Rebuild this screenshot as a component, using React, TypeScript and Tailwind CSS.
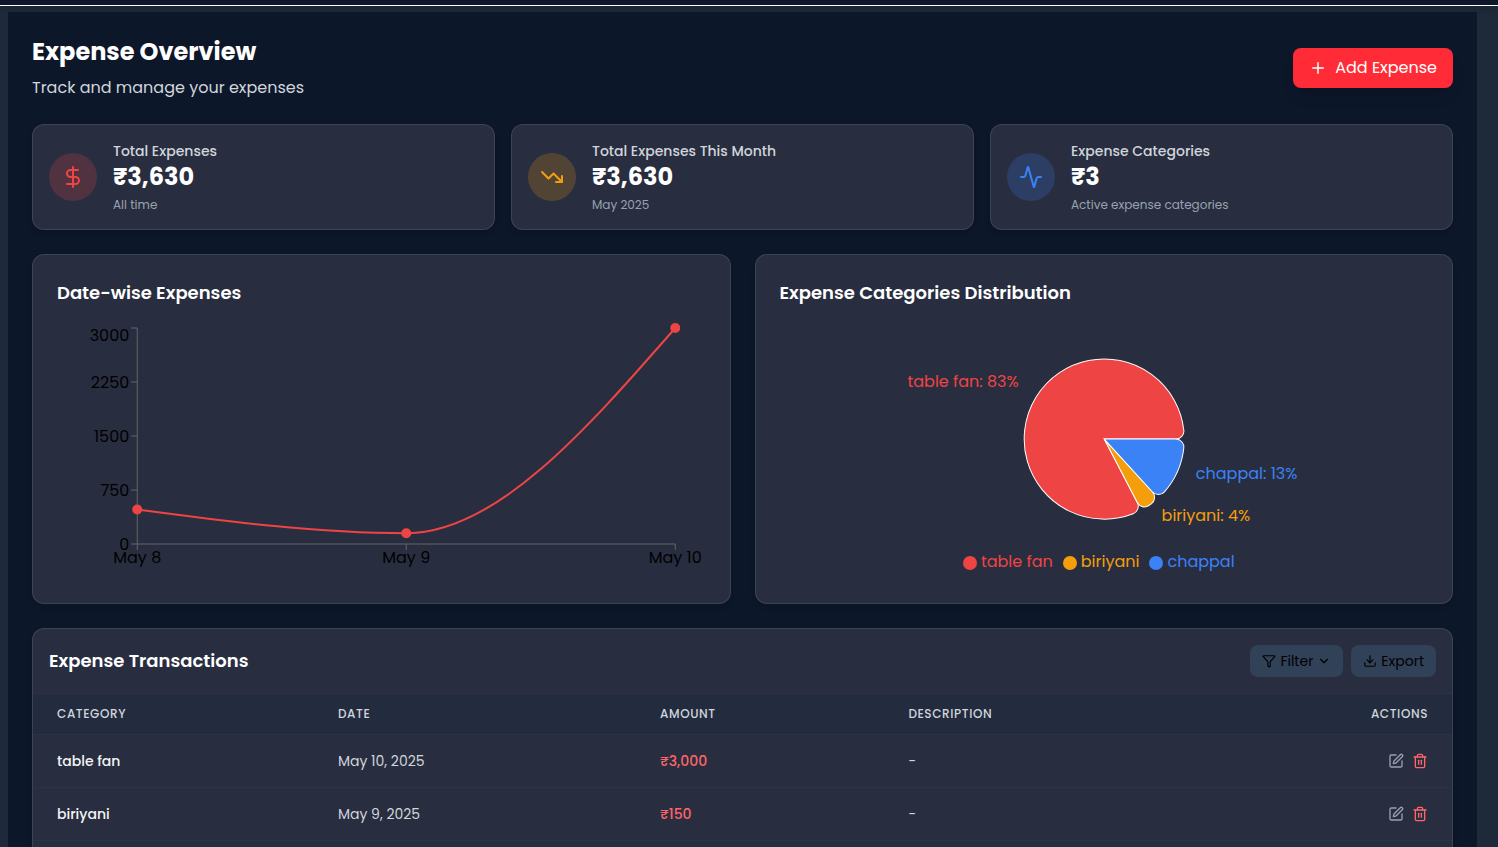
import type { ReactNode } from "react";
import {
  Activity,
  ChevronDown,
  DollarSign,
  Download,
  Filter,
  Plus,
  SquarePen,
  Trash2,
  TrendingDown,
} from "lucide-react";

const rupees = (value: number) => "₹" + value.toLocaleString("en-US");

const transactions = [
  { category: "table fan", date: "May 10, 2025", amount: 3000, description: "-" },
  { category: "biriyani", date: "May 9, 2025", amount: 150, description: "-" },
  { category: "chappal", date: "May 8, 2025", amount: 480, description: "-" },
];

const slices = [
  { name: "table fan", value: 3000, color: "#ef4444" },
  { name: "biriyani", value: 150, color: "#f59e0b" },
  { name: "chappal", value: 480, color: "#3b82f6" },
];

const cardClass = "rounded-xl border border-white/10 bg-[#282e40] shadow-md";

type StatProps = {
  icon: ReactNode;
  iconClass: string;
  label: string;
  value: string;
  note: string;
};

function StatCard({ icon, iconClass, label, value, note }: StatProps) {
  return (
    <section className={`${cardClass} flex items-center gap-4 p-4`}>
      <div className={`flex size-12 shrink-0 items-center justify-center rounded-full ${iconClass}`}>{icon}</div>
      <div>
        <h2 className="text-sm font-medium text-gray-300">{label}</h2>
        <p className="text-2xl font-bold text-white">{value}</p>
        <p className="mt-1 text-xs text-gray-400">{note}</p>
      </div>
    </section>
  );
}

function LineChart() {
  const left = 80;
  const right = 618;
  const top = 5;
  const bottom = 221;
  const step = (right - left) / 2;
  const y = (v: number) => bottom - (v / 3000) * (bottom - top);
  const data = [
    { label: "May 8", value: 480 },
    { label: "May 9", value: 150 },
    { label: "May 10", value: 3000 },
  ];
  const [p0, p1, p2] = data.map((d, i) => ({ x: left + i * step, y: y(d.value) }));
  const third = step / 3;
  const curve =
    `M${p0.x},${p0.y}` +
    `C${p0.x + third},${p0.y + (p1.y - p0.y) / 2},${p1.x - third},${p1.y},${p1.x},${p1.y}` +
    `C${p1.x + third},${p1.y},${p2.x - third},${p2.y - (p2.y - p1.y) / 2},${p2.x},${p2.y}`;
  const ticks = [
    { value: 0, baseline: 227 },
    { value: 750, baseline: 173 },
    { value: 1500, baseline: 119 },
    { value: 2250, baseline: 65 },
    { value: 3000, baseline: 18 },
  ];
  return (
    <svg viewBox="0 0 648 256" className="h-64 w-full" role="img" aria-label="Expenses by date">
      <g stroke="#1e293b" strokeOpacity="0.3" strokeDasharray="3 3">
        {ticks.map((t) => (
          <line key={t.value} x1={left} x2={right} y1={y(t.value)} y2={y(t.value)} />
        ))}
        {data.map((d, i) => (
          <line key={d.label} x1={left + i * step} x2={left + i * step} y1={top} y2={bottom} />
        ))}
      </g>
      <g stroke="#666666">
        <line x1={left} x2={right} y1={bottom} y2={bottom} />
        <line x1={left} x2={left} y1={top} y2={bottom} />
        {ticks.map((t) => (
          <line key={t.value} x1={left - 6} x2={left} y1={y(t.value)} y2={y(t.value)} />
        ))}
        {data.map((d, i) => (
          <line key={d.label} x1={left + i * step} x2={left + i * step} y1={bottom} y2={bottom + 6} />
        ))}
      </g>
      <g fontSize="16" fill="#000000">
        {ticks.map((t) => (
          <text key={t.value} x={left - 8} y={t.baseline} textAnchor="end">
            {t.value}
          </text>
        ))}
        {data.map((d, i) => (
          <text key={d.label} x={left + i * step} y={240} textAnchor="middle">
            {d.label}
          </text>
        ))}
      </g>
      <path d={curve} fill="none" stroke="#ef4444" strokeWidth="2" />
      {[p0, p1, p2].map((p) => (
        <circle key={p.x} cx={p.x} cy={p.y} r="5" fill="#ef4444" />
      ))}
    </svg>
  );
}

const CX = 324;
const CY = 116;
const R = 80;
const CORNER = 8;

function polar(radius: number, degrees: number) {
  const a = (degrees * Math.PI) / 180;
  return { x: CX + radius * Math.cos(a), y: CY - radius * Math.sin(a) };
}

function sectorPath(start: number, end: number) {
  const inner = R - CORNER;
  const theta = Math.asin(CORNER / inner);
  const deg = (theta * 180) / Math.PI;
  const edge = inner * Math.cos(theta);
  const a = polar(edge, start);
  const b = polar(R, start + deg);
  const c = polar(R, end - deg);
  const d = polar(edge, end);
  const large = end - start - 2 * deg > 180 ? 1 : 0;
  return (
    `M${a.x},${a.y}A${CORNER},${CORNER},0,0,0,${b.x},${b.y}` +
    `A${R},${R},0,${large},0,${c.x},${c.y}` +
    `A${CORNER},${CORNER},0,0,0,${d.x},${d.y}L${CX},${CY}Z`
  );
}

function PieChart() {
  const total = slices.reduce((sum, s) => sum + s.value, 0);
  let angle = 0;
  const sectors = slices.map((s) => {
    const start = angle;
    angle += (s.value / total) * 360;
    return { ...s, start, end: angle, label: polar(R + 20, (start + angle) / 2) };
  });
  return (
    <div className="h-64">
      <svg viewBox="0 0 648 227" className="w-full" role="img" aria-label="Share of each category">
        {sectors.map((s) => (
          <path key={s.name} d={sectorPath(s.start, s.end)} fill={s.color} stroke="#ffffff" />
        ))}
        {sectors.map((s) => (
          <text
            key={s.name}
            x={s.label.x}
            y={s.label.y}
            fontSize="16"
            fill={s.color}
            textAnchor={s.label.x > CX ? "start" : "end"}
          >
            {`${s.name}: ${Math.round((s.value / total) * 100)}%`}
          </text>
        ))}
      </svg>
      <ul className="text-center leading-6">
        {slices.map((s) => (
          <li key={s.name} className="mr-[10px] inline-block" style={{ color: s.color }}>
            <span
              className="mr-1 inline-block size-[14px] rounded-full align-middle"
              style={{ backgroundColor: s.color }}
            />
            {s.name}
          </li>
        ))}
      </ul>
    </div>
  );
}

export default function App() {
  return (
    <div className="min-h-screen bg-[#1e2939] font-['Poppins',Inter,sans-serif]">
      <header className="h-[6px] border-b border-white bg-[#0f172a] shadow-md" />
      <main className="mt-[6px] mr-[21px] ml-2 bg-[#0d172a] p-6">
        <div className="mb-6 flex items-center justify-between">
          <div>
            <h1 className="text-2xl font-bold text-white">Expense Overview</h1>
            <p className="mt-2 text-gray-300">Track and manage your expenses</p>
          </div>
          <button
            type="button"
            className="flex h-10 items-center gap-2 rounded-lg bg-[#ff2c37] px-4 text-white shadow-lg"
          >
            <Plus size={18} />
            Add Expense
          </button>
        </div>

        <div className="mb-6 grid grid-cols-3 gap-4">
          <StatCard
            icon={<DollarSign size={24} />}
            iconClass="bg-[#ef4444]/20 text-[#ef4444]"
            label="Total Expenses"
            value={rupees(3630)}
            note="All time"
          />
          <StatCard
            icon={<TrendingDown size={24} />}
            iconClass="bg-[#f59e0b]/20 text-[#f59e0b]"
            label="Total Expenses This Month"
            value={rupees(3630)}
            note="May 2025"
          />
          <StatCard
            icon={<Activity size={24} />}
            iconClass="bg-[#3b82f6]/20 text-[#3b82f6]"
            label="Expense Categories"
            value={rupees(3)}
            note="Active expense categories"
          />
        </div>

        <div className="mb-6 grid grid-cols-2 gap-6">
          <section className={`${cardClass} p-6`}>
            <h2 className="mb-4 text-lg font-semibold text-white">Date-wise Expenses</h2>
            <LineChart />
          </section>
          <section className={`${cardClass} p-6`}>
            <h2 className="mb-4 text-lg font-semibold text-white">Expense Categories Distribution</h2>
            <PieChart />
          </section>
        </div>

        <section className={`${cardClass} overflow-hidden`}>
          <div className="flex items-center justify-between border-b border-[#293444] p-4">
            <h2 className="text-lg font-semibold text-white">Expense Transactions</h2>
            <div className="flex gap-2 text-sm text-black">
              <button type="button" className="flex h-8 items-center gap-1 rounded-lg bg-[#314158] px-3">
                <Filter size={14} />
                Filter
                <ChevronDown size={14} />
              </button>
              <button type="button" className="flex h-8 items-center gap-1 rounded-lg bg-[#314158] px-3">
                <Download size={14} />
                Export
              </button>
            </div>
          </div>
          <table className="w-full table-fixed border-collapse text-left text-sm">
            <thead className="bg-[#232c3f] text-xs tracking-wider text-gray-300 uppercase">
              <tr className="border-b border-[#293444]">
                <th scope="col" className="w-[19.8%] px-6 py-3 font-medium">Category</th>
                <th scope="col" className="w-[22.7%] px-6 py-3 font-medium">Date</th>
                <th scope="col" className="w-[17.5%] px-6 py-3 font-medium">Amount</th>
                <th scope="col" className="px-6 py-3 font-medium">Description</th>
                <th scope="col" className="px-6 py-3 text-right font-medium">Actions</th>
              </tr>
            </thead>
            <tbody>
              {transactions.map((t) => (
                <tr key={t.category} className="border-b border-[#293444] last:bg-[#262f41]">
                  <td className="px-6 py-4 font-medium text-gray-100">{t.category}</td>
                  <td className="px-6 py-4 text-gray-300">{t.date}</td>
                  <td className="px-6 py-4 font-medium text-[#ff6467]">{rupees(t.amount)}</td>
                  <td className="px-6 py-4 text-gray-300">{t.description}</td>
                  <td className="px-6 py-4">
                    <div className="flex justify-end gap-2">
                      <button type="button" aria-label={`Edit ${t.category}`} className="text-gray-400">
                        <SquarePen size={16} />
                      </button>
                      <button type="button" aria-label={`Delete ${t.category}`} className="text-[#ff6467]">
                        <Trash2 size={16} />
                      </button>
                    </div>
                  </td>
                </tr>
              ))}
            </tbody>
          </table>
        </section>
      </main>
    </div>
  );
}
